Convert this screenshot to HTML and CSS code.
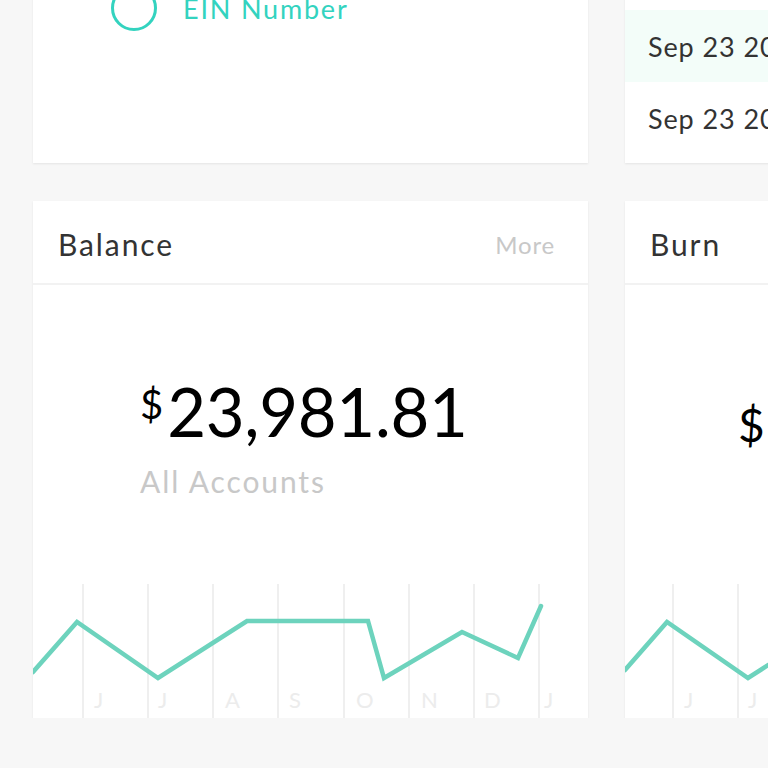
FILE: index.html
```html
<!DOCTYPE html>
<html>
<head>
<meta charset="utf-8">
<link rel="stylesheet" href="styles.css">
</head>
<body>
<div class="grid">
  <div class="card top-card">
    <div class="radio-row">
      <span class="radio"></span>
      <span class="radio-label">EIN Number</span>
    </div>
  </div>
  <div class="card top-card list-card">
    <div class="list-row active">Sep 23 2016</div>
    <div class="list-row">Sep 23 2016</div>
  </div>

  <div class="card stat-card">
    <div class="card-head">
      <span class="card-title">Balance</span>
      <span class="more">More</span>
    </div>
    <div class="stat">
      <div class="amount"><span class="cur">$</span><span class="num">23,981.81</span></div>
      <div class="sub">All Accounts</div>
    </div>
    <svg class="chart" width="555" height="134" viewBox="0 0 555 134">
      <g class="grid-lines">
        <line x1="50" y1="0" x2="50" y2="134"/>
        <line x1="115" y1="0" x2="115" y2="134"/>
        <line x1="180" y1="0" x2="180" y2="134"/>
        <line x1="245" y1="0" x2="245" y2="134"/>
        <line x1="311" y1="0" x2="311" y2="134"/>
        <line x1="376" y1="0" x2="376" y2="134"/>
        <line x1="441" y1="0" x2="441" y2="134"/>
        <line x1="506" y1="0" x2="506" y2="134"/>
      </g>
      <g class="months">
        <text x="61" y="124">J</text>
        <text x="125" y="124">J</text>
        <text x="192" y="124">A</text>
        <text x="256" y="124">S</text>
        <text x="323" y="124">O</text>
        <text x="388" y="124">N</text>
        <text x="451" y="124">D</text>
        <text x="511" y="124">J</text>
      </g>
      <polyline class="line" points="0,88 44,38 125,94 214,37 335,37 351,94 429,48 485,74 508,22"/>
    </svg>
  </div>

  <div class="card stat-card">
    <div class="card-head">
      <span class="card-title">Burn</span>
      <span class="more">More</span>
    </div>
    <div class="stat burn">
      <div class="amount"><span class="cur big">$</span><span class="num">8,214.50</span></div>
      <div class="sub">Per Month</div>
    </div>
    <svg class="chart" width="555" height="134" viewBox="0 0 555 134">
      <g class="grid-lines">
        <line x1="48" y1="0" x2="48" y2="134"/>
        <line x1="113" y1="0" x2="113" y2="134"/>
        <line x1="178" y1="0" x2="178" y2="134"/>
        <line x1="243" y1="0" x2="243" y2="134"/>
      </g>
      <g class="months">
        <text x="59" y="124">J</text>
        <text x="123" y="124">J</text>
        <text x="190" y="124">A</text>
      </g>
      <polyline class="line" points="0,86 42,38 123,94 212,37 333,37"/>
    </svg>
  </div>
</div>
</body>
</html>
```

FILE: styles.css
```css
html, body {
  margin: 0;
  padding: 0;
  background: #f7f7f7;
  font-family: "Lato", "Open Sans", sans-serif;
  overflow: hidden;
}

.grid {
  display: grid;
  grid-template-columns: 555px 555px;
  column-gap: 37px;
  row-gap: 38px;
  margin-top: -40px;
  padding-left: 33px;
  width: 1200px;
}

.card {
  background: #fff;
  box-shadow: 0 1px 2px rgba(0, 0, 0, 0.08);
  overflow: hidden;
}

.top-card {
  height: 203px;
}

.radio-row {
  display: flex;
  align-items: center;
  gap: 26px;
  padding: 25px 0 0 78px;
}

.radio {
  width: 40px;
  height: 40px;
  border: 3px solid #33d3bf;
  border-radius: 50%;
}

.radio-label {
  color: #33d3bf;
  font-size: 27px;
  letter-spacing: 1.8px;
}

.list-card {
  padding-top: 50px;
  box-sizing: border-box;
}

.list-row {
  height: 72px;
  display: flex;
  align-items: center;
  padding-left: 23px;
  font-size: 27px;
  letter-spacing: 0.9px;
  color: #333;
  white-space: nowrap;
}

.list-row.active {
  background: #f3fdf9;
}

.stat-card {
  height: 517px;
  display: flex;
  flex-direction: column;
}

.card-head {
  height: 84px;
  border-bottom: 2px solid #f2f2f2;
  display: flex;
  align-items: center;
  justify-content: space-between;
  padding: 4px 33px 0 25px;
  box-sizing: border-box;
  flex-shrink: 0;
}

.card-title {
  font-size: 30px;
  letter-spacing: 1.9px;
  color: #333;
}

.more {
  font-size: 24px;
  letter-spacing: 0.8px;
  color: #c8c8c8;
}

.stat {
  flex: 1;
  padding: 90px 0 0 107px;
}

.amount {
  display: flex;
  align-items: flex-start;
  white-space: nowrap;
  color: #000;
}

.cur {
  font-size: 40px;
  line-height: 1;
  margin-top: 9px;
  margin-right: 4px;
}

.cur.big {
  font-size: 46px;
  margin-top: 27px;
  margin-left: 6px;
}

.num {
  font-size: 67px;
  line-height: 72px;
  letter-spacing: -0.3px;
}

.sub {
  font-size: 30px;
  letter-spacing: 1.9px;
  color: #c8c8c8;
  margin-top: 16px;
  white-space: nowrap;
}

.burn .sub {
  padding-left: 80px;
}

.chart {
  display: block;
  flex-shrink: 0;
}

.grid-lines line {
  stroke: #efefef;
  stroke-width: 2;
}

.months text {
  fill: #ececec;
  font-family: "Lato", sans-serif;
  font-size: 22px;
}

.line {
  fill: none;
  stroke: #6dd3bd;
  stroke-width: 4.5;
  stroke-linejoin: miter;
  stroke-linecap: round;
}
```
